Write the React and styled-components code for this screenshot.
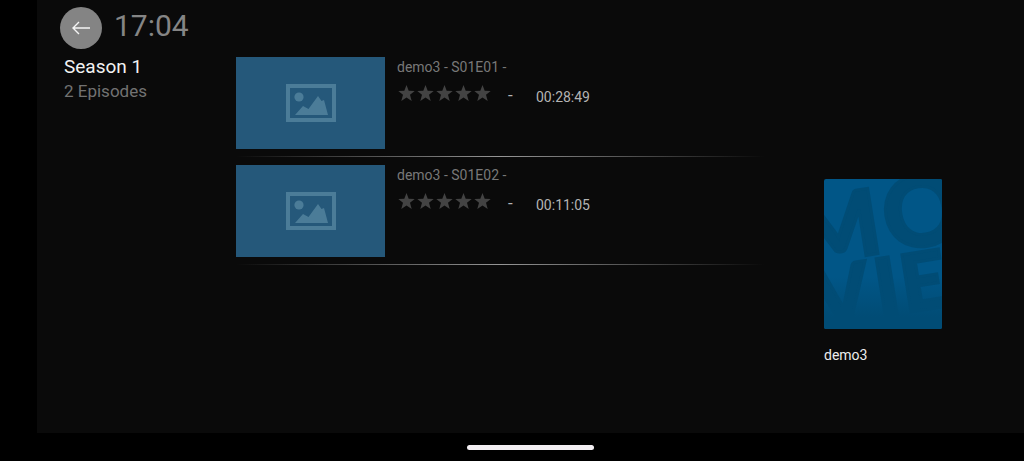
import React from "react";
import styled, { createGlobalStyle } from "styled-components";

const GlobalStyle = createGlobalStyle`
  * {
    box-sizing: border-box;
  }

  body {
    margin: 0;
    background: #000;
    font-family: Roboto, "Liberation Sans", sans-serif;
  }

  h1, h2, h3, p, ul, figure {
    margin: 0;
    padding: 0;
    font-weight: 400;
  }
`;

const Screen = styled.div`
  display: flex;
  flex-direction: column;
  min-height: 100vh;
  padding-left: 37px;
  background: #000;
`;

const Page = styled.main`
  flex: 1;
  background: #0a0a0a;
`;

const Header = styled.header`
  display: flex;
  align-items: center;
  gap: 12px;
  height: 57px;
  padding: 0 0 1px 23px;
`;

const BackButton = styled.button`
  display: flex;
  align-items: center;
  justify-content: center;
  width: 42px;
  height: 42px;
  padding: 0;
  border: none;
  border-radius: 50%;
  background: #848484;
  color: #f4f4f4;
  cursor: pointer;
`;

const Clock = styled.time`
  padding-bottom: 4px;
  font-size: 30px;
  line-height: 36px;
  color: #858585;
`;

const Content = styled.div`
  display: grid;
  grid-template-columns: 172px 1fr 200px;
  padding-left: 27px;
`;

const SeasonTitle = styled.h1`
  font-size: 19px;
  line-height: 20px;
  color: #f2f2f2;
`;

const SeasonCount = styled.p`
  margin-top: 4px;
  font-size: 17px;
  line-height: 20px;
  color: #727272;
`;

const EpisodeList = styled.ul`
  margin-right: 60px;
  list-style: none;
`;

const Episode = styled.li`
  display: grid;
  grid-template-columns: 149px 1fr;
  column-gap: 12px;
  row-gap: 7px;
  margin-bottom: 8px;
`;

const Thumbnail = styled.div`
  display: flex;
  align-items: center;
  justify-content: center;
  height: 92px;
  background: #25587a;
  color: #4b7c98;
`;

const EpisodeTitle = styled.h2`
  font-size: 14px;
  line-height: 20px;
  color: #787878;
`;

const Meta = styled.div`
  display: flex;
  margin-top: 6px;
  font-size: 14px;
  line-height: 24px;
  color: #b4b4b4;
`;

const Rating = styled.div`
  display: flex;
  width: 111px;
  height: 22px;
  color: #434343;
`;

const Score = styled.span`
  width: 28px;
  font-size: 17px;
  line-height: 24px;
`;

const Duration = styled.span`
  padding-top: 2px;
`;

const Divider = styled.div`
  grid-column: 1 / -1;
  height: 1px;
  background: linear-gradient(90deg, #0a0a0a, #969696 50%, #0a0a0a);
`;

const Show = styled.figure`
  width: 118px;
  margin-top: 122px;
`;

const Poster = styled.div`
  height: 150px;
  border-radius: 2px;
  overflow: hidden;
  background: #015687;
`;

const ShowName = styled.figcaption`
  margin-top: 16px;
  font-size: 14px;
  line-height: 20px;
  color: #ededed;
`;

const GestureBar = styled.footer`
  display: flex;
  align-items: center;
  justify-content: center;
  height: 28px;
  background: #000;
`;

const GestureHandle = styled.div`
  width: 127px;
  height: 5px;
  border-radius: 3px;
  background: #f3eff3;
`;

const ArrowIcon = () => (
  <svg width="20" height="16" viewBox="0 0 20 16" fill="none" stroke="currentColor" strokeWidth="1.4">
    <path d="M19 8H2M8 2L2 8l6 6" />
  </svg>
);

const PictureIcon = () => (
  <svg width="50" height="38" viewBox="0 0 50 38" fill="currentColor">
    <path fillRule="evenodd" d="M0 0h50v38H0zM4 4v30h42V4z" />
    <circle cx="13" cy="13" r="4.6" />
    <path d="M9 31l8-9 5.5 3L32 12l3.5 5 2.5-1 4 15z" />
  </svg>
);

const StarIcon = () => (
  <svg width="19" height="22" viewBox="0 0 19 22" fill="currentColor">
    <path d="M9.5 2l2.2 5.7 6 .3-4.7 3.8 1.7 6.2-5.2-3.5L4.300 18 6 11.800 1.300 8l6-.3z" />
  </svg>
);

const PosterArt = () => (
  <svg width="118" height="150" viewBox="0 0 118 150" aria-hidden="true">
    <defs>
      <linearGradient id="posterFade" x1="0" y1="0" x2="0" y2="1">
        <stop offset="0.65" stopColor="#014c75" stopOpacity="0" />
        <stop offset="0.92" stopColor="#014c75" />
      </linearGradient>
    </defs>
    <g
      fill="#014c75"
      stroke="#014c75"
      strokeWidth="3"
      fontFamily="Lato, sans-serif"
      fontWeight="900"
      transform="rotate(-9)"
    >
      <text x="-38" y="82" fontSize="91">M</text>
      <text x="52" y="82" fontSize="98">O</text>
      <text x="-29" y="145" fontSize="80">V</text>
      <text x="33" y="145" fontSize="80">I</text>
      <text x="59" y="145" fontSize="80">E</text>
    </g>
    <rect width="118" height="150" fill="url(#posterFade)" />
  </svg>
);

const episodes = [
  { id: 1, title: "demo3 - S01E01 -", duration: "00:28:49" },
  { id: 2, title: "demo3 - S01E02 -", duration: "00:11:05" },
];

const EpisodeRow = ({ episode }) => (
  <Episode>
    <Thumbnail>
      <PictureIcon />
    </Thumbnail>
    <div>
      <EpisodeTitle>{episode.title}</EpisodeTitle>
      <Meta>
        <Rating role="img" aria-label="Not rated">
          {[1, 2, 3, 4, 5].map((star) => (
            <StarIcon key={star} />
          ))}
        </Rating>
        <Score>-</Score>
        <Duration>{episode.duration}</Duration>
      </Meta>
    </div>
    <Divider />
  </Episode>
);

const App = () => (
  <>
    <GlobalStyle />
    <Screen>
      <Page>
        <Header>
          <BackButton type="button" aria-label="Back">
            <ArrowIcon />
          </BackButton>
          <Clock>17:04</Clock>
        </Header>
        <Content>
          <section>
            <SeasonTitle>Season 1</SeasonTitle>
            <SeasonCount>2 Episodes</SeasonCount>
          </section>
          <EpisodeList>
            {episodes.map((episode) => (
              <EpisodeRow key={episode.id} episode={episode} />
            ))}
          </EpisodeList>
          <Show>
            <Poster>
              <PosterArt />
            </Poster>
            <ShowName>demo3</ShowName>
          </Show>
        </Content>
      </Page>
      <GestureBar>
        <GestureHandle />
      </GestureBar>
    </Screen>
  </>
);

export default App;
